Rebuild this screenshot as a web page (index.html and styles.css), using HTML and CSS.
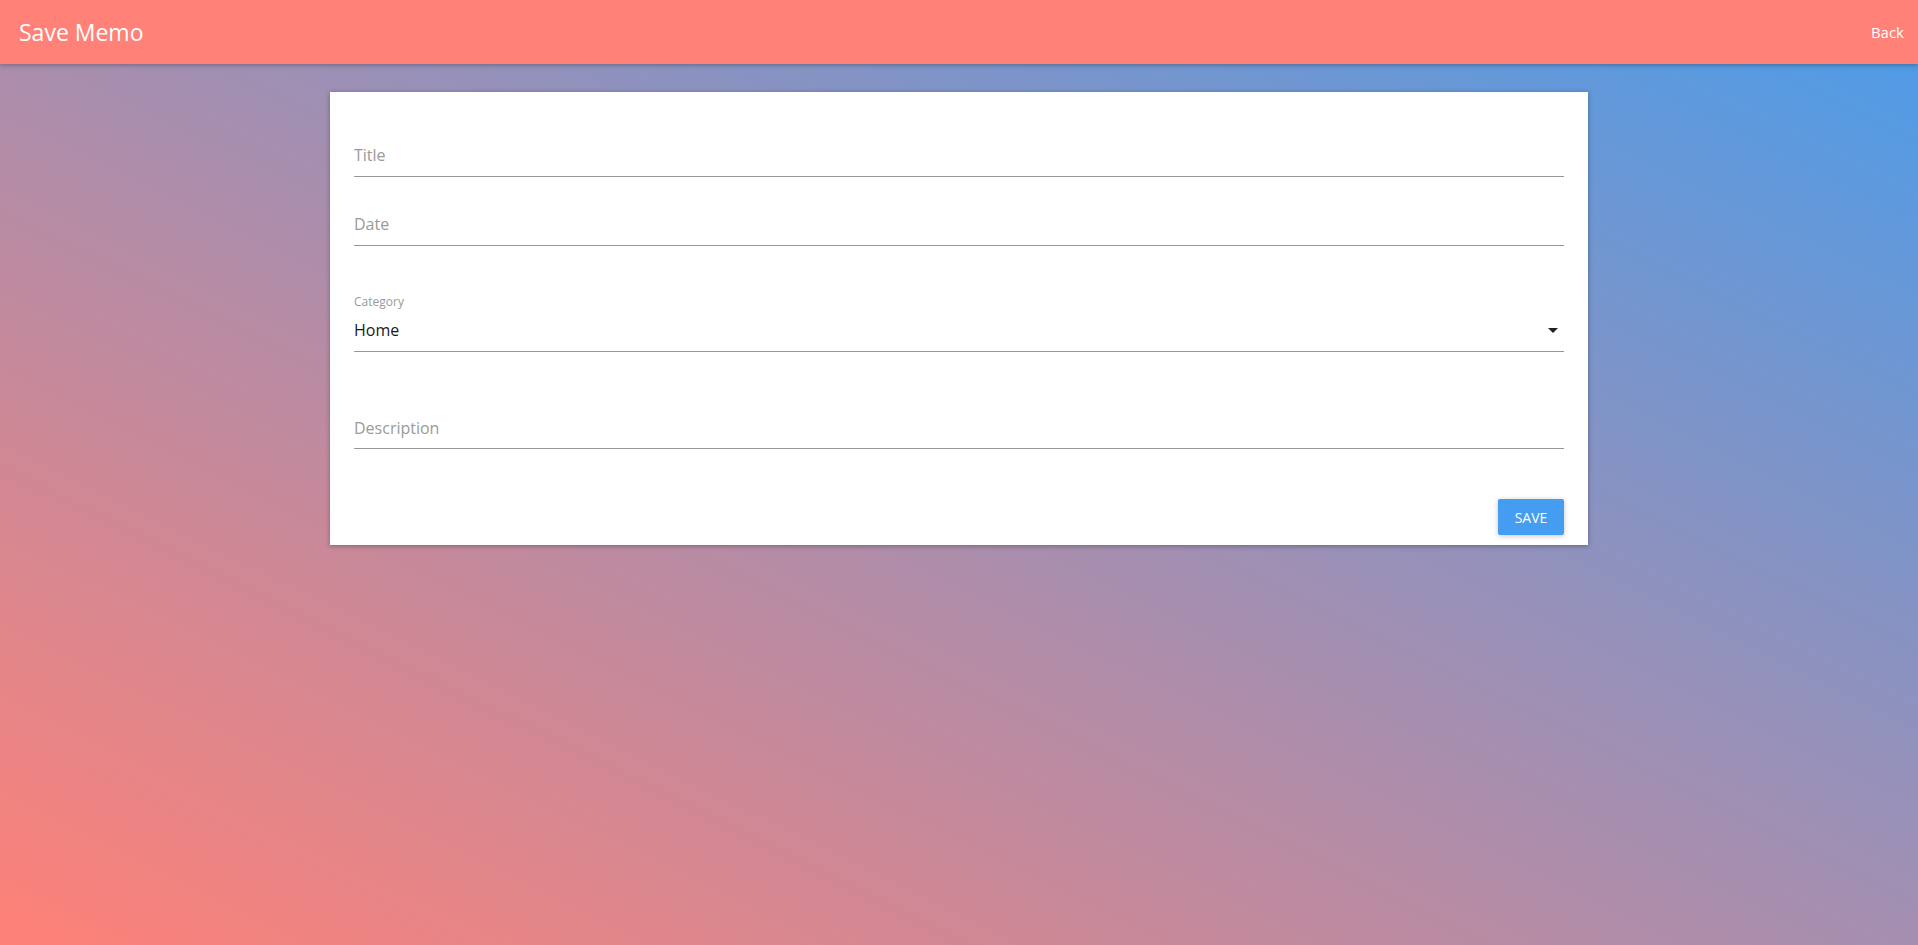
FILE: index.html
```html
<!DOCTYPE html>
<html lang="en">

<head>
    <meta charset="UTF-8">
    <meta name="viewport" content="width=device-width, initial-scale=1.0">
    <title>Save Memo</title>
    <link rel="stylesheet" href="styles.css">
</head>

<body>
    <header class="app-bar">
        <h1 class="app-title">Save Memo</h1>
        <a class="back-link" href="#">Back</a>
    </header>

    <main class="page">
        <form class="card">
            <div class="field field-title">
                <input type="text" name="title" placeholder="Title">
            </div>
            <div class="field field-date">
                <input type="text" name="date" placeholder="Date">
            </div>
            <div class="field field-category">
                <label class="small-label">Category</label>
                <div class="select">
                    <span>Home</span>
                    <svg width="10" height="5" viewBox="0 0 10 5">
                        <path d="M0 0 L10 0 L5 5 Z" fill="#212121" />
                    </svg>
                </div>
            </div>
            <div class="field field-description">
                <input type="text" name="description" placeholder="Description">
            </div>
            <div class="actions">
                <button type="button" class="save-btn">Save</button>
            </div>
        </form>
    </main>
</body>

</html>
```

FILE: styles.css
```css
html,
body {
    margin: 0;
    padding: 0;
}

body {
    font-family: 'Open Sans', 'Noto Sans', sans-serif;
    min-height: 100vh;
    background: linear-gradient(to top right, #ff8177, #4a9ce9);
}

.app-bar {
    display: flex;
    justify-content: space-between;
    align-items: center;
    height: 64px;
    padding: 0 14px 0 19px;
    background-color: #ff8177;
    box-shadow: 0 1px 6px rgba(0, 0, 0, 0.16), 0 1px 4px rgba(0, 0, 0, 0.16);
    position: relative;
    z-index: 1;
}

.app-title {
    margin: 0;
    font-size: 23px;
    font-weight: 400;
    line-height: 64px;
    color: #fff;
}

.back-link {
    font-size: 15px;
    line-height: 64px;
    color: #fff;
    text-decoration: none;
}

.page {
    display: flex;
    justify-content: center;
    padding-top: 28px;
}

.card {
    width: 1210px;
    padding: 51px 24px 10px;
    background-color: #fff;
    box-shadow: 0 1px 6px rgba(0, 0, 0, 0.16), 0 1px 4px rgba(0, 0, 0, 0.16);
}

.field {
    border-bottom: 1px solid #979797;
    padding-bottom: 9px;
}

.field input {
    display: block;
    width: 100%;
    margin: 0;
    padding: 0;
    border: none;
    outline: none;
    background: transparent;
    font-family: inherit;
    font-size: 16px;
    line-height: 24px;
    height: 24px;
    color: #212121;
}

.field input::placeholder {
    color: #9a9a9a;
}

.field-date {
    margin-top: 35px;
}

.field-category {
    margin-top: 48px;
}

.field-description {
    margin-top: 64px;
    padding-bottom: 8px;
}

.small-label {
    display: block;
    font-size: 12px;
    line-height: 16px;
    color: #9a9a9a;
    margin-bottom: 8px;
}

.select {
    display: flex;
    justify-content: space-between;
    align-items: center;
    font-size: 16px;
    line-height: 24px;
    color: #1a1a1a;
    padding-right: 6px;
}

.actions {
    display: flex;
    justify-content: flex-end;
    margin-top: 50px;
}

.save-btn {
    width: 66px;
    height: 36px;
    border: none;
    border-radius: 2px;
    background-color: #449df0;
    color: #fff;
    font-family: inherit;
    font-size: 14px;
    text-transform: uppercase;
    cursor: pointer;
    box-shadow: 0 1px 6px rgba(0, 0, 0, 0.12), 0 1px 4px rgba(0, 0, 0, 0.12);
}
```
